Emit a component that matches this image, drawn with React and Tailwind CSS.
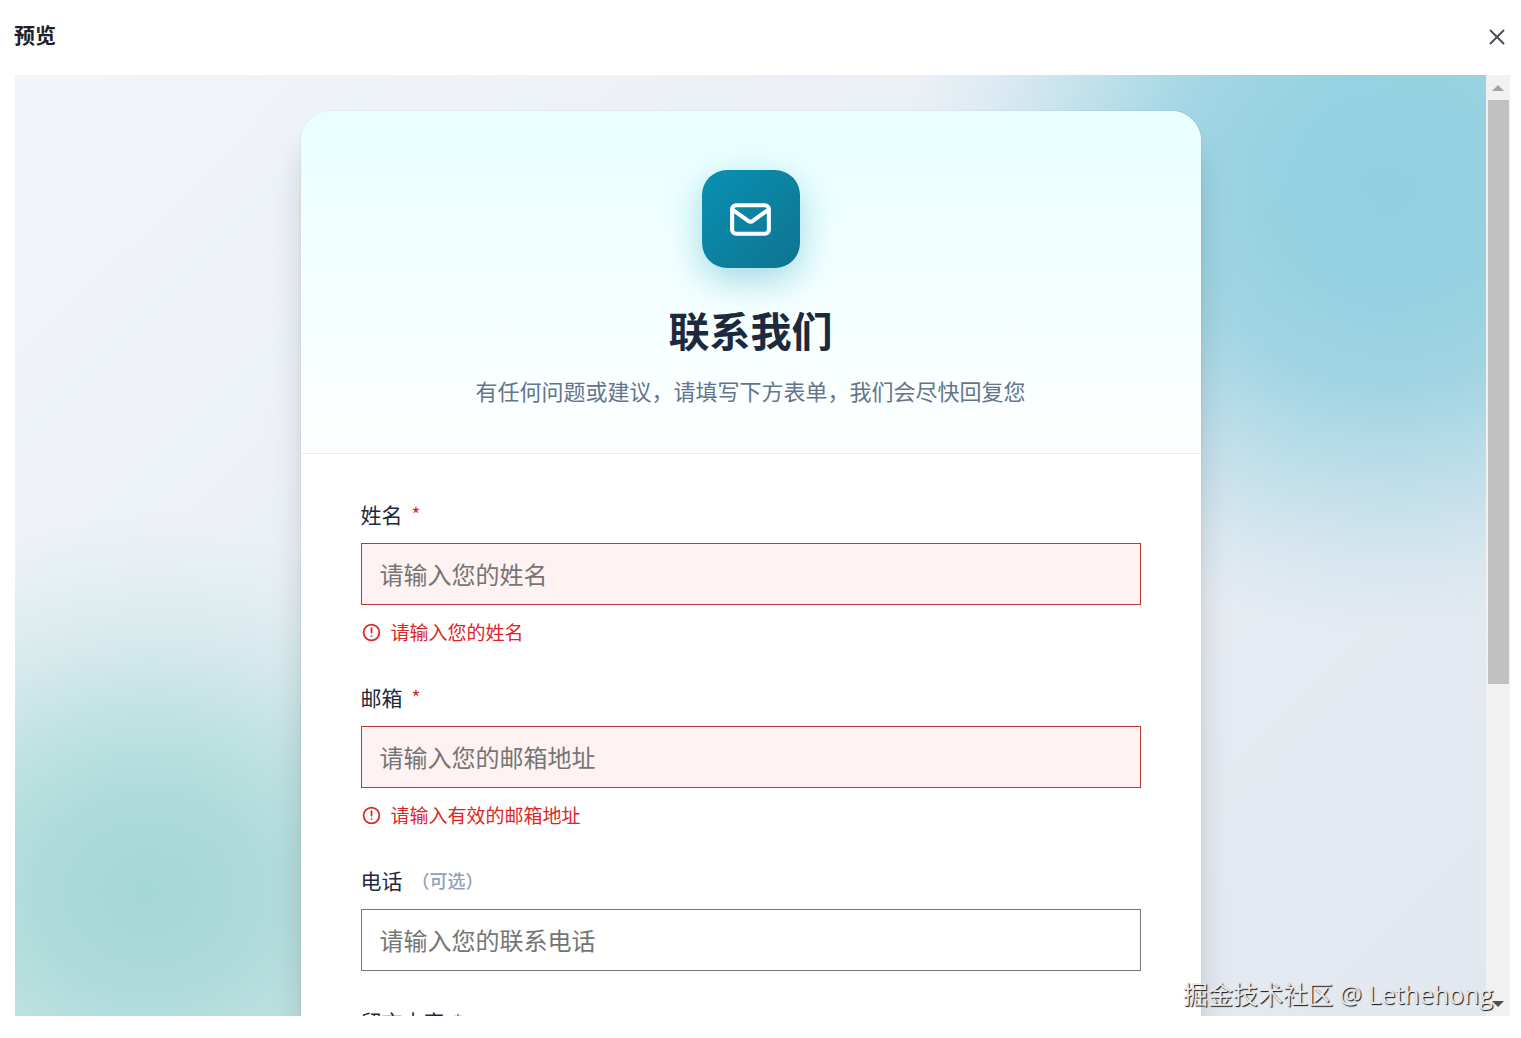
import React from 'react';
import { X } from 'lucide-react';

const fields = [
  {
    id: 'name',
    label: '姓名',
    required: true,
    type: 'text',
    placeholder: '请输入您的姓名',
    error: '请输入您的姓名',
  },
  {
    id: 'email',
    label: '邮箱',
    required: true,
    type: 'email',
    placeholder: '请输入您的邮箱地址',
    error: '请输入有效的邮箱地址',
  },
  {
    id: 'phone',
    label: '电话',
    optional: true,
    type: 'tel',
    placeholder: '请输入您的联系电话',
  },
];

function MailIcon() {
  return (
    <svg className="size-[49px]" viewBox="0 0 24 24" fill="none" stroke="currentColor" strokeWidth="2" strokeLinecap="round" strokeLinejoin="round" aria-hidden="true">
      <path d="M3 7l7.89 5.7a2 2 0 002.22 0L21 7M5 19h14a2 2 0 002-2V7a2 2 0 00-2-2H5a2 2 0 00-2 2v10a2 2 0 002 2z" />
    </svg>
  );
}

function AlertIcon() {
  return (
    <svg className="size-[21px] shrink-0" viewBox="0 0 24 24" fill="none" stroke="currentColor" strokeWidth="2" strokeLinecap="round" strokeLinejoin="round" aria-hidden="true">
      <path d="M12 7v5m0 4h.01M21 12a9 9 0 11-18 0 9 9 0 0118 0z" />
    </svg>
  );
}

function FieldLabel({ htmlFor, children, required, optional }) {
  return (
    <label htmlFor={htmlFor} className="flex items-center gap-[9px] h-[30px] text-[21px] leading-[30px] text-slate-800">
      {children}
      {required && <span className="text-[19px] text-[#dc2626]">*</span>}
      {optional && <span className="text-[18px] font-medium text-slate-400">（可选）</span>}
    </label>
  );
}

function Field({ id, label, type, placeholder, error, required, optional }) {
  return (
    <div>
      <FieldLabel htmlFor={id} required={required} optional={optional}>
        {label}
      </FieldLabel>
      <input
        id={id}
        type={type}
        placeholder={placeholder}
        aria-invalid={Boolean(error)}
        className={
          error
            ? 'mt-[14px] block w-full h-[62px] px-[18px] pb-[2px] border border-[#c13535] bg-[#fef2f2] text-[24px] placeholder:text-[#757575] outline-none'
            : 'mt-[14px] block w-full h-[62px] px-[18px] pb-[2px] border border-[#767676] bg-white text-[24px] placeholder:text-[#757575] outline-none'
        }
      />
      {error && (
        <p className="mt-3 flex items-center gap-[9px] text-[19px] leading-[30px] text-[#dc2626]">
          <AlertIcon />
          {error}
        </p>
      )}
    </div>
  );
}

function ScrollTrack() {
  return (
    <div className="w-6 shrink-0 flex flex-col items-center bg-[#f1f1f1]" aria-hidden="true">
      <div className="h-[25px] flex items-center">
        <svg className="w-3 h-[6px]" viewBox="0 0 12 6">
          <path d="M0 6L6 0l6 6z" fill="#a3a3a3" />
        </svg>
      </div>
      <div className="flex-1 w-[21px]">
        <div className="h-[65.6%] bg-[#c1c1c1]" />
      </div>
      <div className="h-[25px] flex items-center">
        <svg className="w-3 h-[6px]" viewBox="0 0 12 6">
          <path d="M0 0l6 6 6-6z" fill="#505050" />
        </svg>
      </div>
    </div>
  );
}

function ContactCard() {
  return (
    <section className="w-full max-w-[900px] mx-auto rounded-[30px] overflow-hidden bg-white shadow-[0_0_2px_rgba(15,23,42,0.12),0_30px_36px_-8px_rgba(15,23,42,0.25)]">
      <header className="flex flex-col items-center px-[60px] pt-[59px] pb-[46px] bg-linear-to-b from-[#e8ffff] to-white border-b border-[#e0f3f5]">
        <div className="size-[98px] rounded-[25px] flex items-center justify-center text-white bg-linear-to-br from-[#0891b2] to-[#0e7490] shadow-[0_12px_36px_rgba(8,145,178,0.35)]">
          <MailIcon />
        </div>
        <h1 className="mt-9 text-[41px] leading-[50px] font-bold text-slate-800">联系我们</h1>
        <p className="mt-[19px] text-[22px] leading-[34px] text-[#64748b]">
          有任何问题或建议，请填写下方表单，我们会尽快回复您
        </p>
      </header>

      <form className="px-[60px] pt-[45px] pb-[60px] flex flex-col gap-[35px]" noValidate>
        {fields.map((field) => (
          <Field key={field.id} {...field} />
        ))}
        <div>
          <FieldLabel htmlFor="message" required>
            留言内容
          </FieldLabel>
          <textarea
            id="message"
            rows={5}
            className="mt-[14px] block w-full px-[18px] py-3 border border-[#767676] text-[24px] outline-none"
          />
        </div>
      </form>
    </section>
  );
}

export default function App() {
  return (
    <div className="relative h-screen flex flex-col pb-[22px] bg-white font-['Noto_Sans_CJK_SC',sans-serif]" lang="zh-CN">
      <div className="h-[75px] shrink-0 flex items-center justify-between pl-[14px] pr-[11px] pb-1">
        <h2 className="pb-1 text-[21px] leading-8 font-bold text-[#1f2329]">预览</h2>
        <button type="button" aria-label="关闭" className="pt-[2px] text-[#4a4f55]">
          <X size={26} strokeWidth={1.75} />
        </button>
      </div>

      <div className="flex-1 min-h-0 flex ml-[15px] mr-[11px]">
        {/* Soft cyan and teal glows over the slate gradient */}
        <main className="flex-1 min-w-0 overflow-hidden pt-9 bg-[radial-gradient(ellipse_480px_450px_at_1370px_110px,rgba(6,160,192,0.38)_0%,rgba(6,160,192,0.36)_25%,rgba(6,160,192,0.31)_45%,rgba(6,160,192,0.18)_65%,rgba(6,160,192,0.06)_85%,transparent_100%),radial-gradient(ellipse_440px_380px_at_130px_815px,rgba(13,165,145,0.32)_0%,rgba(13,165,145,0.28)_25%,rgba(13,165,145,0.20)_45%,rgba(13,165,145,0.10)_65%,rgba(13,165,145,0.03)_85%,transparent_100%),linear-gradient(135deg,#f1f5f9_0%,#e2e8f0_100%)]">
          <ContactCard />
        </main>
        <ScrollTrack />
      </div>

      <p className="absolute right-[28px] bottom-[25px] text-[25px] leading-[38px] text-[#e6e8eb] [text-shadow:1px_1px_1px_#111] pointer-events-none font-['Open_Sans','Noto_Sans_CJK_SC',sans-serif]">
        掘金技术社区 @ Lethehong
      </p>
    </div>
  );
}
